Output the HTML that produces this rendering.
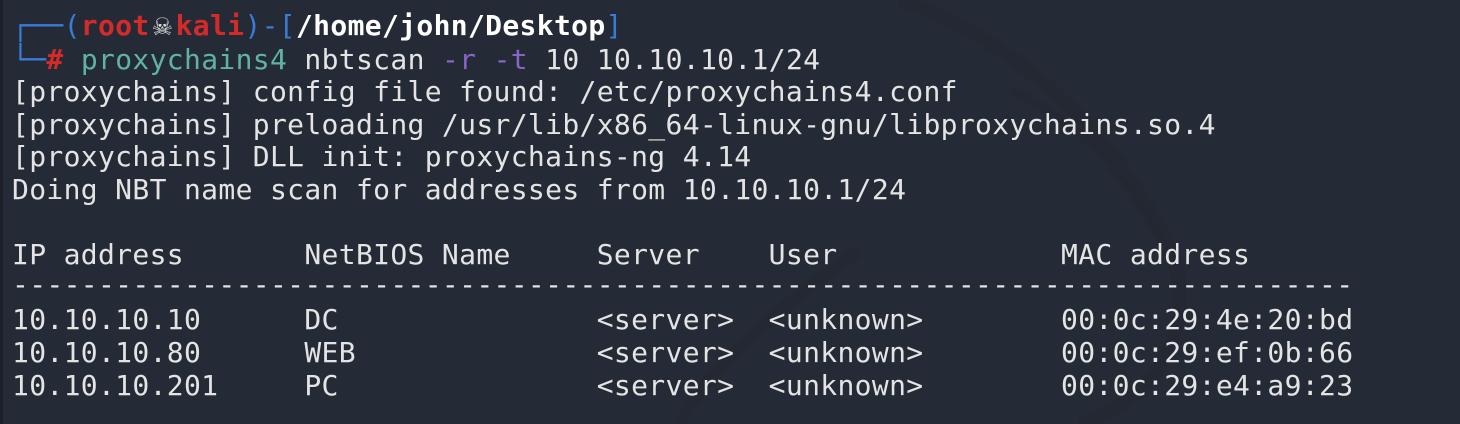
<!DOCTYPE html>
<html><head><meta charset="utf-8"><style>
html,body{margin:0;padding:0}
body{width:1460px;height:424px;background:#252b36;overflow:hidden;position:relative}
.edge{position:absolute;left:0;top:0;width:3px;height:424px;background:#1b1f27}
svg{position:absolute;left:0;top:0}
pre{position:absolute;left:12px;top:10px;margin:0;font-family:"DejaVu Sans Mono","Liberation Mono",monospace;font-size:28px;letter-spacing:0.34px;line-height:32.6px;color:#e4e4e4;white-space:pre}
.b{color:#3b7bd8}.r{color:#d42a2a;font-weight:bold}.w{color:#fff;font-weight:bold}
.g{color:#5fb3a1}.p{color:#8a63c9}
.sk{display:inline-block;width:26px;text-align:center;color:#e0e0e0;font-family:"DejaVu Sans",sans-serif;font-weight:normal;font-size:24px}
.d{position:relative;top:-3px}
</style></head><body>
<div class="edge"></div>
<svg width="1460" height="424" viewBox="0 0 1460 424">
<path d="M900 0 C1020 40 1120 140 1170 250 C1200 320 1160 400 1080 424" stroke="#21262f" stroke-width="14" fill="none" opacity="0.5"/>
<path d="M1010 90 C1080 120 1120 170 1160 240" stroke="#21262f" stroke-width="8" fill="none" opacity="0.5"/>
<path d="M860 250 C760 320 700 380 680 424" stroke="#21262f" stroke-width="12" fill="none" opacity="0.5"/>
</svg>
<pre><span class="b">┌──(</span><span class="r">root<span class="sk">☠&#xFE0E;</span>kali</span><span class="b">)-[</span><span class="w">/home/john/Desktop</span><span class="b">]</span>
<span class="b">└─</span><span class="r">#</span> <span class="g">proxychains4</span> nbtscan <span class="p">-r</span> <span class="p">-t</span> 10 10.10.10.1/24
[proxychains] config file found: /etc/proxychains4.conf
[proxychains] preloading /usr/lib/x86_64-linux-gnu/libproxychains.so.4
[proxychains] DLL init: proxychains-ng 4.14
Doing NBT name scan for addresses from 10.10.10.1/24

IP address       NetBIOS Name     Server    User             MAC address
<span class="d">------------------------------------------------------------------------------</span>
10.10.10.10      DC               &lt;server&gt;  &lt;unknown&gt;        00:0c:29:4e:20:bd
10.10.10.80      WEB              &lt;server&gt;  &lt;unknown&gt;        00:0c:29:ef:0b:66
10.10.10.201     PC               &lt;server&gt;  &lt;unknown&gt;        00:0c:29:e4:a9:23</pre>
</body></html>
